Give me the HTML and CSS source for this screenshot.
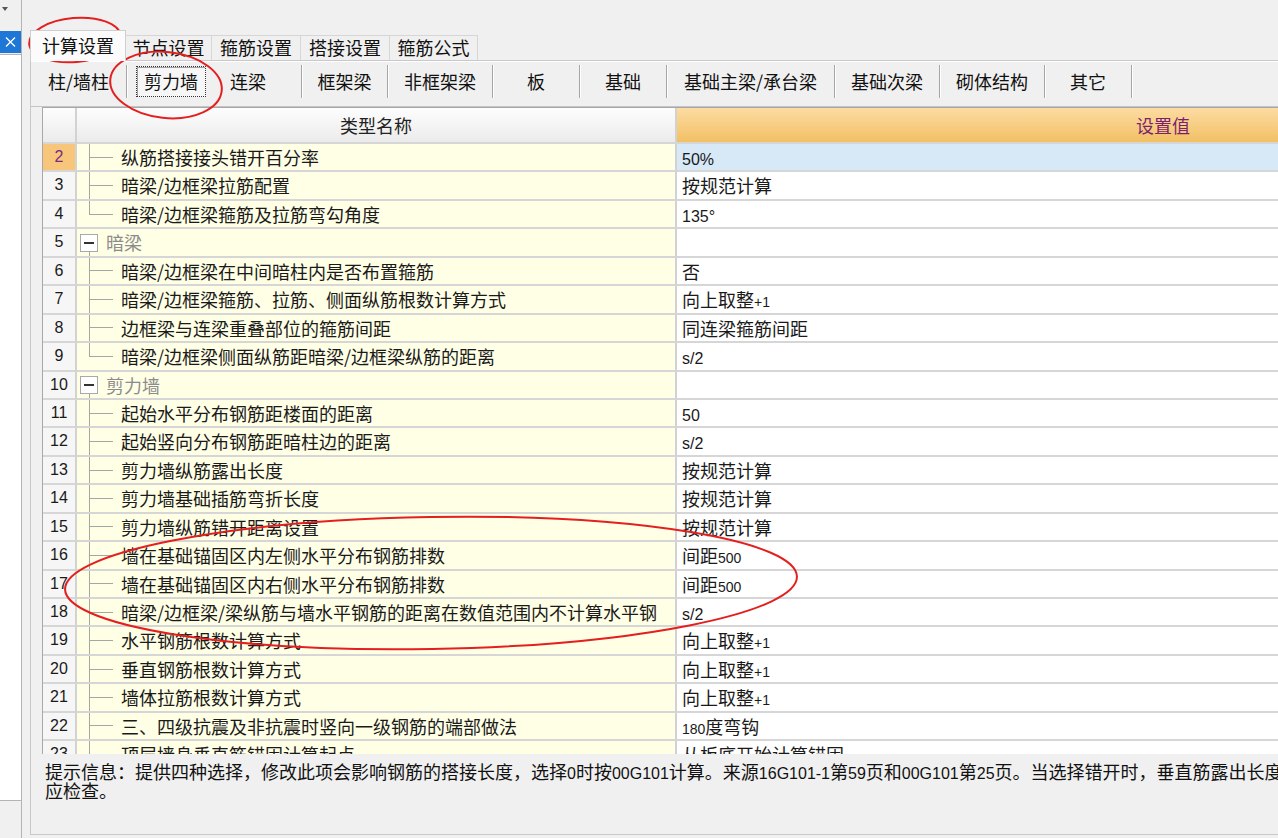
FILE: index.html
```html
<!DOCTYPE html>
<html lang="zh-CN">
<head>
<meta charset="utf-8">
<title>计算设置</title>
<link rel="stylesheet" href="styles.css">
</head>
<body>
<div class="app">
  <aside class="side">
    <div class="side-top"><span class="side-arrow"></span></div>
    <div class="side-close">
      <svg width="11" height="10" viewBox="0 0 11 10"><path d="M1 0.5 L10 9.5 M10 0.5 L1 9.5" stroke="#fff" stroke-width="1.3" fill="none"/></svg>
    </div>
    <div class="side-list"></div>
    <div class="side-foot"></div>
  </aside>
  <main class="main">
    <nav class="tabs">
      <div class="tab active w96">计算设置</div>
      <div class="tab w86">节点设置</div>
      <div class="tab w90">箍筋设置</div>
      <div class="tab w90">搭接设置</div>
      <div class="tab w88">箍筋公式</div>
    </nav>
    <section class="panel">
      <div class="subtabs">
        <div class="st s96">柱/墙柱</div>
        <div class="st s86 on nosep"><span class="focus">剪力墙</span></div>
        <div class="st s89 shift">连梁</div>
        <div class="st s86">框架梁</div>
        <div class="st s105">非框架梁</div>
        <div class="st s87">板</div>
        <div class="st s87">基础</div>
        <div class="st s168">基础主梁/承台梁</div>
        <div class="st s105">基础次梁</div>
        <div class="st s105">砌体结构</div>
        <div class="st s87">其它</div>
      </div>
      <div class="grid">
        <div class="row head">
          <div class="hnum"></div>
          <div class="hname">类型名称</div>
          <div class="hval">设置值</div>
        </div>
        <div class="row sel">
          <div class="num">2</div>
          <div class="name"><span class="br"></span><span class="txt">纵筋搭接接头错开百分率</span></div>
          <div class="val"><span class="lat">50%</span></div>
        </div>
        <div class="row">
          <div class="num">3</div>
          <div class="name"><span class="br"></span><span class="txt">暗梁/边框梁拉筋配置</span></div>
          <div class="val">按规范计算</div>
        </div>
        <div class="row">
          <div class="num">4</div>
          <div class="name"><span class="br end"></span><span class="txt">暗梁/边框梁箍筋及拉筋弯勾角度</span></div>
          <div class="val"><span class="lat">135°</span></div>
        </div>
        <div class="row grp">
          <div class="num">5</div>
          <div class="name"><span class="node"><span class="sp"></span><span class="box"></span><span class="down"></span></span><span class="gtxt">暗梁</span></div>
          <div class="val"></div>
        </div>
        <div class="row">
          <div class="num">6</div>
          <div class="name"><span class="br"></span><span class="txt">暗梁/边框梁在中间暗柱内是否布置箍筋</span></div>
          <div class="val">否</div>
        </div>
        <div class="row">
          <div class="num">7</div>
          <div class="name"><span class="br"></span><span class="txt">暗梁/边框梁箍筋、拉筋、侧面纵筋根数计算方式</span></div>
          <div class="val">向上取整<span class="sm">+1</span></div>
        </div>
        <div class="row">
          <div class="num">8</div>
          <div class="name"><span class="br"></span><span class="txt">边框梁与连梁重叠部位的箍筋间距</span></div>
          <div class="val">同连梁箍筋间距</div>
        </div>
        <div class="row">
          <div class="num">9</div>
          <div class="name"><span class="br end"></span><span class="txt">暗梁/边框梁侧面纵筋距暗梁/边框梁纵筋的距离</span></div>
          <div class="val"><span class="lat">s/2</span></div>
        </div>
        <div class="row grp">
          <div class="num">10</div>
          <div class="name"><span class="node"><span class="sp"></span><span class="box"></span><span class="down"></span></span><span class="gtxt">剪力墙</span></div>
          <div class="val"></div>
        </div>
        <div class="row">
          <div class="num">11</div>
          <div class="name"><span class="br"></span><span class="txt">起始水平分布钢筋距楼面的距离</span></div>
          <div class="val"><span class="lat">50</span></div>
        </div>
        <div class="row">
          <div class="num">12</div>
          <div class="name"><span class="br"></span><span class="txt">起始竖向分布钢筋距暗柱边的距离</span></div>
          <div class="val"><span class="lat">s/2</span></div>
        </div>
        <div class="row">
          <div class="num">13</div>
          <div class="name"><span class="br"></span><span class="txt">剪力墙纵筋露出长度</span></div>
          <div class="val">按规范计算</div>
        </div>
        <div class="row">
          <div class="num">14</div>
          <div class="name"><span class="br"></span><span class="txt">剪力墙基础插筋弯折长度</span></div>
          <div class="val">按规范计算</div>
        </div>
        <div class="row">
          <div class="num">15</div>
          <div class="name"><span class="br"></span><span class="txt">剪力墙纵筋错开距离设置</span></div>
          <div class="val">按规范计算</div>
        </div>
        <div class="row">
          <div class="num">16</div>
          <div class="name"><span class="br"></span><span class="txt">墙在基础锚固区内左侧水平分布钢筋排数</span></div>
          <div class="val">间距<span class="sm">500</span></div>
        </div>
        <div class="row">
          <div class="num">17</div>
          <div class="name"><span class="br"></span><span class="txt">墙在基础锚固区内右侧水平分布钢筋排数</span></div>
          <div class="val">间距<span class="sm">500</span></div>
        </div>
        <div class="row">
          <div class="num">18</div>
          <div class="name"><span class="br"></span><span class="txt">暗梁/边框梁/梁纵筋与墙水平钢筋的距离在数值范围内不计算水平钢</span></div>
          <div class="val"><span class="lat">s/2</span></div>
        </div>
        <div class="row">
          <div class="num">19</div>
          <div class="name"><span class="br"></span><span class="txt">水平钢筋根数计算方式</span></div>
          <div class="val">向上取整<span class="sm">+1</span></div>
        </div>
        <div class="row">
          <div class="num">20</div>
          <div class="name"><span class="br"></span><span class="txt">垂直钢筋根数计算方式</span></div>
          <div class="val">向上取整<span class="sm">+1</span></div>
        </div>
        <div class="row">
          <div class="num">21</div>
          <div class="name"><span class="br"></span><span class="txt">墙体拉筋根数计算方式</span></div>
          <div class="val">向上取整<span class="sm">+1</span></div>
        </div>
        <div class="row">
          <div class="num">22</div>
          <div class="name"><span class="br"></span><span class="txt">三、四级抗震及非抗震时竖向一级钢筋的端部做法</span></div>
          <div class="val"><span class="sm">180</span>度弯钩</div>
        </div>
        <div class="row">
          <div class="num">23</div>
          <div class="name"><span class="br"></span><span class="txt">顶层墙身垂直筋锚固计算起点</span></div>
          <div class="val">从板底开始计算锚固</div>
        </div>
      </div>
      <div class="hint">
        <div class="hline">提示信息：提供四种选择，修改此项会影响钢筋的搭接长度，选择<span class="hl">0</span>时按<span class="hl">00G101</span>计算。来源<span class="hl">16G101-1</span>第<span class="hl">59</span>页和<span class="hl">00G101</span>第<span class="hl">25</span>页。当选择错开时，垂直筋露出长度</div>
        <div class="hline">应检查。</div>
      </div>
    </section>
  </main>
</div>
<svg class="marks" width="1278" height="838" viewBox="0 0 1278 838">
  <ellipse cx="75" cy="40" rx="46" ry="22" transform="rotate(-5 75 40)"/>
  <ellipse cx="166" cy="85" rx="56" ry="33" transform="rotate(6 166 85)"/>
  <ellipse cx="431" cy="583" rx="366" ry="66" transform="rotate(-1 431 583)"/>
</svg>
</body>
</html>
```

FILE: styles.css
```css
* { box-sizing: border-box; }
html, body { margin: 0; padding: 0; }
body {
  width: 1278px;
  height: 838px;
  overflow: hidden;
  position: relative;
  background: #f0f0f0;
  font-family: "Noto Sans CJK SC", "Noto Sans", sans-serif;
  font-size: 18px;
  color: #1a1a1a;
}
.app { display: flex; height: 838px; }

/* left side strip */
.side {
  width: 22px;
  flex: none;
  display: flex;
  flex-direction: column;
  border-right: 1px solid #b4b4b4;
}
.side-top { height: 31px; padding: 7px 0 0 2px; }
.side-arrow {
  display: block;
  width: 0; height: 0;
  border-left: 3px solid transparent;
  border-right: 3px solid transparent;
  border-top: 4px solid #555;
}
.side-close {
  height: 22px;
  background: #1e76d6;
  display: flex;
  align-items: center;
  justify-content: center;
}
.side-list {
  flex: 1;
  margin-top: 1px;
  background: #fff;
  border-top: 1px solid #b4b4b4;
}
.side-foot { height: 38px; border-top: 1px solid #b4b4b4; }

/* main area */
.main {
  flex: 1;
  min-width: 0;
  margin-left: 8px;
  padding-bottom: 3px;
  display: flex;
  flex-direction: column;
}
.tabs {
  height: 60px;
  flex: none;
  display: flex;
  align-items: flex-end;
}
.tab {
  height: 25px;
  line-height: 23px;
  text-align: center;
  background: #f0f0f0;
  border: 1px solid #d6d6d6;
  border-bottom: none;
  margin-left: -1px;
  color: #111;
}
.tab.active {
  height: 31px;
  line-height: 29px;
  margin-left: 0;
  margin-bottom: -1px;
  background: #fbfbfb;
  border-color: #cfcfcf;
  position: relative;
  z-index: 1;
}
.w96 { width: 96px; }
.w86 { width: 87px; }
.w90 { width: 90px; }
.w88 { width: 89px; }

.panel {
  flex: 1;
  min-height: 0;
  border: 1px solid #c8c8c8;
  border-right: none;
  background: #f0f0f0;
  display: flex;
  flex-direction: column;
  overflow: hidden;
}

/* sub tabs */
.subtabs {
  height: 46px;
  flex: none;
  display: flex;
  align-items: flex-start;
  border-top: 1px solid #fff;
  border-bottom: 1px solid #c4c4c4;
}
.st {
  height: 33px;
  margin-top: 3px;
  line-height: 33px;
  text-align: center;
  white-space: nowrap;
  border-right: 1px solid #a6a6a6;
  box-shadow: 1px 0 0 #fff;
  color: #111;
}
.st.nosep { border-right-color: transparent; box-shadow: none; }
.st.shift { padding-right: 18px; }
.st.on { display: flex; align-items: center; justify-content: center; padding-left: 3px; }
.focus {
  display: block;
  height: 31px;
  line-height: 29px;
  padding: 0 7px;
  border: 1px dotted #333;
  background: #f6f6f6;
  box-shadow: inset 1px 1px 0 #a0a0a0;
}
.s96 { width: 96px; }
.s86 { width: 86px; }
.s89 { width: 89px; }
.s105 { width: 105px; }
.s87 { width: 87px; }
.s168 { width: 168px; }

/* grid */
.grid {
  height: 647px;
  flex: none;
  margin-left: 11px;
  border-left: 1px solid #a8a8a8;
  border-top: 1px solid #a8a8a8;
  background: #fff;
  overflow: hidden;
}
.row {
  display: grid;
  grid-template-columns: 34px 600px 972px;
  height: 28.45px;
}
.row > div {
  border-bottom: 2px solid #d6d6d6;
  white-space: nowrap;
  overflow: hidden;
}
.row.head { height: 36px; }
.hnum, .hname {
  background: linear-gradient(#fdfdfd, #ebebeb);
  border-right: 2px solid #d2d2d2;
}
.hname {
  text-align: center;
  line-height: 34px;
  color: #222;
}
.hval {
  background: linear-gradient(#fcdca3, #f2c064);
  text-align: center;
  line-height: 34px;
  color: #7b1f70;
}
.num {
  background: #f6f6f6;
  border-right: 2px solid #d2d2d2;
  text-align: center;
  font-family: "Liberation Sans", "Noto Sans", sans-serif;
  font-size: 16px;
  line-height: 26px;
  color: #1a1a1a;
}
.sel .num { background: #f7c67a; color: #7b2a83; }
.name {
  background: #ffffe6;
  border-right: 2px solid #d2d2d2;
  display: flex;
  align-items: stretch;
}
.val {
  background: #fff;
  padding-left: 5px;
  line-height: 26px;
}
.sel .val { background: #d7e8f7; }
.lat {
  font-family: "Liberation Sans", "Noto Sans", sans-serif;
  font-size: 16px;
}
.sm {
  font-family: "Liberation Sans", "Noto Sans", sans-serif;
  font-size: 14px;
}
.hl {
  font-family: "Liberation Sans", "Noto Sans", sans-serif;
  font-size: 16px;
}

/* tree connectors */
.br {
  flex: none;
  width: 24px;
  margin-left: 12px;
  display: flex;
  flex-direction: column;
}
.br::before {
  content: "";
  flex: 1;
  border-left: 1px solid #a6a6a6;
  border-bottom: 1px solid #a6a6a6;
}
.br::after {
  content: "";
  flex: 1;
  border-left: 1px solid #a6a6a6;
}
.br.end::after { border-left-color: transparent; }
.txt {
  margin-left: 8px;
  line-height: 26px;
}
.node {
  flex: none;
  width: 18px;
  margin-left: 3px;
  display: flex;
  flex-direction: column;
  align-items: center;
}
.node .sp { flex: 1; }
.node .down { flex: 1; width: 0; border-left: 1px solid #a6a6a6; }
.box {
  flex: none;
  width: 18px;
  height: 18px;
  border: 1px solid #a9a9a9;
  background: #fff;
  display: flex;
  align-items: center;
  justify-content: center;
}
.box::before {
  content: "";
  width: 10px;
  height: 2px;
  background: #333;
}
.gtxt {
  margin-left: 8px;
  line-height: 26px;
  color: #8c8c8c;
}

/* hint */
.hint {
  flex: 1;
  padding: 9px 0 0 14px;
  line-height: 17px;
  white-space: nowrap;
  color: #111;
}
.hline { white-space: nowrap; }

/* annotation marks */
.marks {
  position: absolute;
  left: 0;
  top: 0;
  pointer-events: none;
}
.marks ellipse {
  fill: none;
  stroke: #e3201f;
  stroke-width: 2;
}
```
